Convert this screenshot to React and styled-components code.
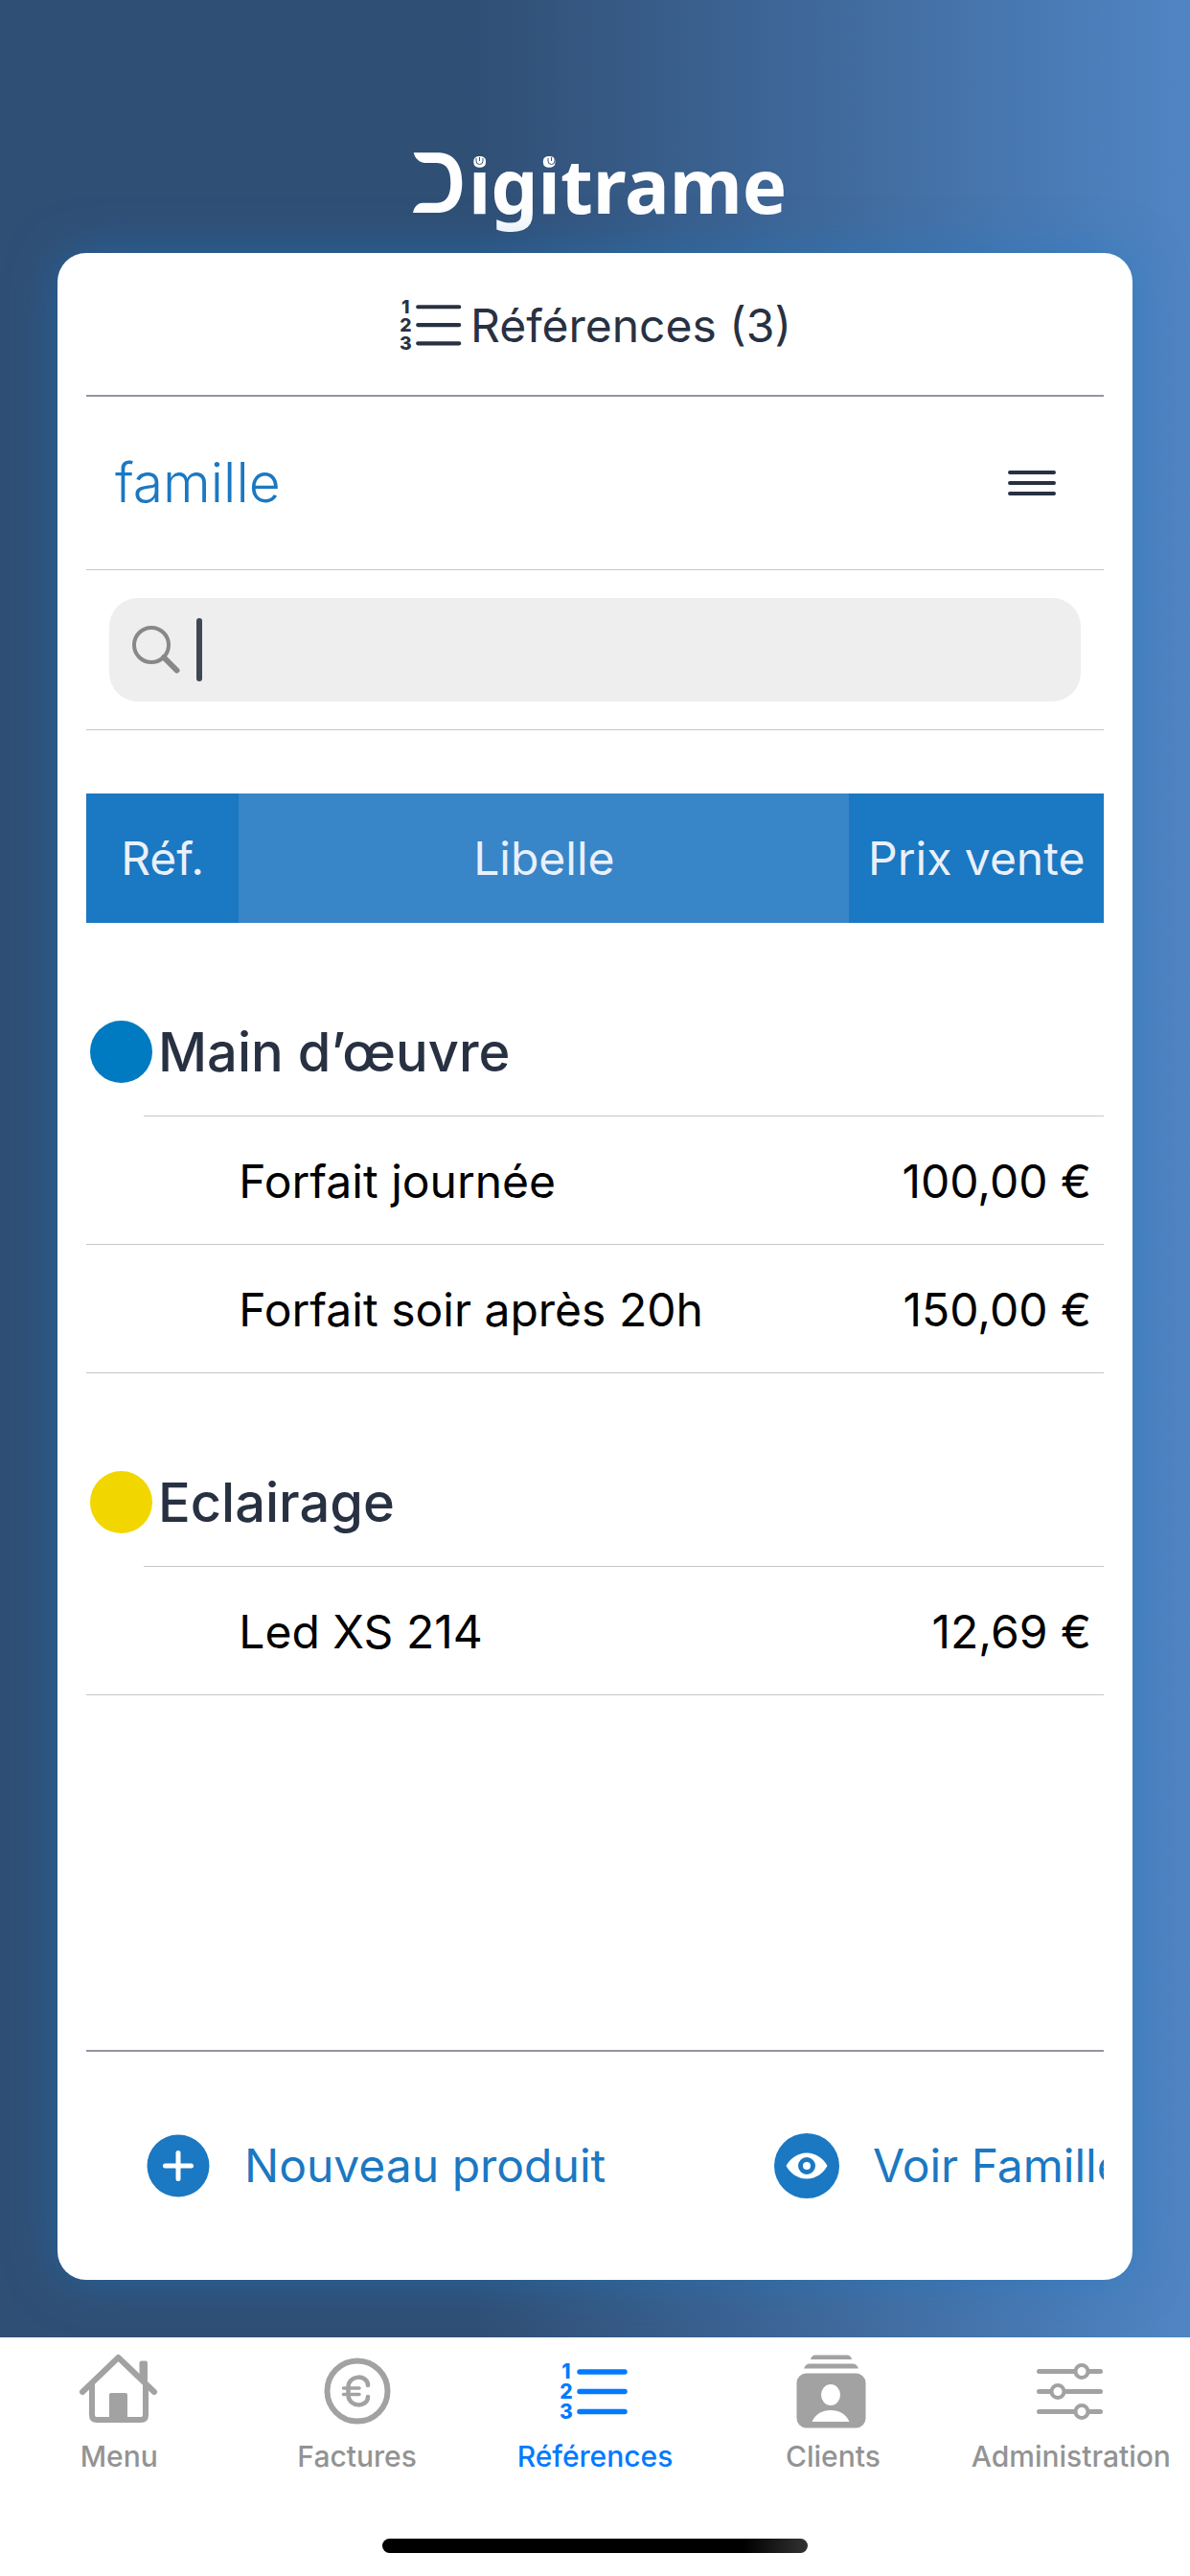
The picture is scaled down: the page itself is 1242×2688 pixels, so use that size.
import React from 'react'
import styled, { createGlobalStyle, css } from 'styled-components'

const colors = {
	navy: '#283142',
	blue: '#1b78c2',
	blueSoft: '#3885c7',
	active: '#007aff',
	grey: '#a2a2a2',
	label: '#939393',
	line: '#c6c6c8',
	lineDark: '#9296a2',
	field: '#eeeeee',
}

const GlobalStyle = createGlobalStyle`
	* {
		box-sizing: border-box;
	}
	body {
		margin: 0;
		font-family: Inter, 'Liberation Sans', sans-serif;
		font-size: 48px;
		line-height: 60px;
		color: ${colors.navy};
	}
	button,
	input {
		font: inherit;
		color: inherit;
		border: 0;
		padding: 0;
		background: none;
		outline: none;
	}
	svg {
		overflow: visible;
	}
`

const Page = styled.div`
	display: flex;
	flex-direction: column;
	min-height: 100vh;
	background: linear-gradient(to right, #304f75 40%, #5085c4 100%);
`
const Brand = styled.header`
	display: flex;
	justify-content: center;
	padding: 156px 0 18px;
`
const Card = styled.main`
	display: flex;
	flex-direction: column;
	flex: 1;
	margin: 0 60px 60px;
	padding: 0 30px;
	border-radius: 30px;
	background: #fff;
	box-shadow: 0 0 50px rgba(27, 121, 197, 0.5);
`
const CardTitle = styled.h1`
	display: flex;
	align-items: center;
	justify-content: center;
	gap: 9px;
	height: 150px;
	margin: 0;
	padding-top: 4px;
	font-size: inherit;
	font-weight: 400;
	border-bottom: 2px solid ${colors.lineDark};
`
const FilterRow = styled.div`
	display: flex;
	align-items: center;
	justify-content: space-between;
	height: 181px;
	padding: 0 49px 0 30px;
	border-bottom: 1px solid ${colors.line};
`
const FilterName = styled.h2`
	margin: 0;
	font-size: 57px;
	font-weight: 300;
	color: ${colors.blue};
`
const IconButton = styled.button`
	display: flex;
`
const SearchRow = styled.form`
	padding: 29px 24px;
	border-bottom: 1px solid ${colors.line};
`
const SearchField = styled.label`
	display: flex;
	align-items: center;
	height: 108px;
	padding: 0 24px;
	border-radius: 30px;
	background: ${colors.field};
`
const Caret = styled.span`
	width: 6px;
	height: 66px;
	margin-left: 17px;
	border-radius: 3px;
	background: #3f4655;
`
const SearchInput = styled.input`
	flex: 1;
	min-width: 0;
	caret-color: transparent;
`
const Table = styled.table`
	width: 100%;
	margin-top: 66px;
	table-layout: fixed;
	border-collapse: separate;
	border-spacing: 0;
`
const HeadCell = styled.th`
	width: ${props => props.$width};
	height: 135px;
	padding: 0;
	font-weight: 400;
	color: #e9f0fb;
	background: ${props => (props.$soft ? colors.blueSoft : colors.blue)};
`
const GroupCell = styled.th`
	padding: 0;
	text-align: left;
	font-size: 56px;
	font-weight: 500;
`
const GroupTitle = styled.div`
	display: flex;
	align-items: center;
	gap: 6px;
	padding: 102px 4px 34px;
`
const Dot = styled.span`
	width: 65px;
	height: 65px;
	border-radius: 50%;
	background: ${props => props.$color};
`
const GroupLine = styled.div`
	height: 1px;
	margin-left: 60px;
	background: ${colors.line};
`
const Cell = styled.td`
	height: 134px;
	padding: 2px 0 0;
	color: #000;
	white-space: nowrap;
	border-bottom: 1px solid ${colors.line};
	${props =>
		props.$price &&
		css`
			padding-right: 13px;
			text-align: right;
		`}
`
const Actions = styled.div`
	display: grid;
	grid-auto-flow: column;
	grid-auto-columns: 656px;
	align-items: center;
	height: 240px;
	margin-top: auto;
	padding-left: 62px;
	overflow: hidden;
	border-top: 2px solid ${colors.lineDark};
`
const Action = styled.button`
	display: flex;
	align-items: center;
	gap: 35px;
	color: ${colors.blue};
	white-space: nowrap;
`
const TabBar = styled.nav`
	display: flex;
	flex-direction: column;
	align-items: center;
	height: 249px;
	background: #fff;
`
const Tabs = styled.div`
	display: grid;
	grid-template-columns: repeat(5, 1fr);
	width: 100%;
	height: 210px;
`
const Tab = styled.a`
	display: flex;
	flex-direction: column;
	align-items: center;
	gap: 10px;
	padding-top: 16px;
	font-size: 30px;
	font-weight: 500;
	line-height: 36px;
	text-decoration: none;
	color: ${props => (props.$active ? colors.active : colors.label)};
	svg {
		color: ${props => (props.$active ? colors.active : colors.grey)};
	}
`
const HomeIndicator = styled.div`
	width: 444px;
	height: 15px;
	border-radius: 8px;
	background: linear-gradient(to right, #000 85%, #333);
`

const Logo = () => (
	<svg width='402' height='90' viewBox='-11 -2 402 90' role='img' aria-label='Digitrame'>
		<path
			fill='#fff'
			d='M.7 1.3H27C43 2 51.3 14 51.3 32.7S43 63.5 27 64H0C1 58 5 53.7 10 53.7H25C36 53 39.3 45 39.3 32.7S36 12.5 25 12H12C6 11 2 7 .7 1.3Z'
		/>
		<text x='58' y='65' fill='#fff' fontFamily='Noto Sans, sans-serif' fontWeight='700' fontSize='78'>
			igitrame
		</text>
		{/* small rings inside the dots of both i */}
		<g fill='none' stroke='#3a5a86' strokeWidth='1'>
			<path d='M66 7V10A3.500 3.500 0 0 0 73 10V7M69.500 6V10' />
			<path d='M141 7V10A3.500 3.500 0 0 0 148 10V7M144.500 6V10' />
		</g>
	</svg>
)

const ListIcon = ({ width, height, stroke }) => (
	<svg width={width} height={height} viewBox={width > 80 ? '0 0 84 80' : '4 11 72 61'} aria-hidden='true'>
		<path d='M26 20H73M26 40.5H73M26 61.5H73' stroke='currentColor' strokeWidth={stroke} strokeLinecap='round' />
		<g fill='currentColor' fontSize='21' fontWeight='800' textAnchor='middle'>
			<text x='12' y='27'>1</text>
			<text x='12' y='48'>2</text>
			<text x='12' y='69'>3</text>
		</g>
	</svg>
)

const MenuIcon = () => (
	<svg width='52' height='28' viewBox='0 0 52 28' aria-hidden='true'>
		<path d='M3 3H49M3 14H49M3 25H49' stroke={colors.navy} strokeWidth='4' strokeLinecap='round' />
	</svg>
)

const SearchIcon = () => (
	<svg width='50' height='50' viewBox='0 0 50 50' fill='none' stroke='#88888b' aria-hidden='true'>
		<circle cx='20' cy='20' r='18' strokeWidth='4' />
		<path d='M33 33L46.5 46.5' strokeWidth='6' strokeLinecap='round' />
	</svg>
)

const PlusIcon = () => (
	<svg width='68' height='68' viewBox='0 0 68 68' aria-hidden='true'>
		<circle cx='34' cy='34' r='32.5' fill={colors.blue} />
		<path d='M34 20.5V47.5M20.5 34H47.5' stroke='#fff' strokeWidth='5' strokeLinecap='round' />
	</svg>
)

const EyeIcon = () => (
	<svg width='68' height='68' viewBox='0 0 68 68' aria-hidden='true'>
		<circle cx='34' cy='34' r='34' fill={colors.blue} />
		<path d='M12.5 34C16 27 24 20.5 34 20.5S52 27 55.5 34C52 41 44 47.5 34 47.5S16 41 12.5 34Z' fill='#fff' />
		<circle cx='34' cy='34' r='6.5' fill='none' stroke={colors.blue} strokeWidth='5' />
	</svg>
)

const HomeIcon = () => (
	<svg width='84' height='80' viewBox='0 0 84 80' fill='none' stroke='currentColor' strokeWidth='6' aria-hidden='true'>
		<path d='M4 41L41.5 5L79 41' strokeLinecap='round' strokeLinejoin='round' />
		<path d='M14 31V65Q14 70 19 70H65Q70 70 70 65V31' />
		<path d='M63.5 25V10.5Q63.5 8.500 65.5 8.5H70Q72 8.5 72 10.5V34Z' fill='currentColor' stroke='none' />
		<path d='M32 71V44Q32 42 34 42H49Q51 42 51 44V71Z' fill='currentColor' stroke='none' />
	</svg>
)

const EuroIcon = () => (
	<svg width='84' height='80' viewBox='0 0 84 80' fill='none' stroke='currentColor' strokeLinecap='round' aria-hidden='true'>
		<circle cx='42' cy='40' r='31.5' strokeWidth='6' />
		<path d='M53 34C53 22.5 32.5 22.5 32.5 36V44C32.5 57.5 53 57.5 53 46' strokeWidth='4.5' />
		<path d='M27.5 37H44M27.5 43.5H44' strokeWidth='3.5' />
	</svg>
)

const ClientsIcon = () => (
	<svg width='84' height='80' viewBox='0 0 84 80' fill='currentColor' aria-hidden='true'>
		<path d='M19 7Q20 2.5 24 2.5H57Q61 2.5 62 7Z' />
		<path d='M12 16.5Q14 11.5 18 11.5H63Q67 11.5 69 16.5Z' />
		<rect x='4.5' y='21.5' width='72' height='57' rx='10' />
		<ellipse cx='40' cy='44' rx='10' ry='11' fill='#fff' />
		<path d='M20.5 72C24 64 31 60 40 60S56 64 59.5 72Z' fill='#fff' />
	</svg>
)

const SlidersIcon = () => (
	<svg width='84' height='80' viewBox='0 0 84 80' stroke='currentColor' strokeLinecap='round' aria-hidden='true'>
		<path d='M8.5 19.5H72.5M8.5 40.5H72.5M8.5 61.5H72.5' strokeWidth='5' />
		<g fill='#fff' strokeWidth='4'>
			<circle cx='53' cy='19.5' r='6.5' />
			<circle cx='28' cy='40.5' r='6.5' />
			<circle cx='53' cy='61.5' r='6.5' />
		</g>
	</svg>
)

const groups = [
	{
		name: 'Main d’œuvre',
		color: '#007ac0',
		items: [
			{ label: 'Forfait journée', price: '100,00 €' },
			{ label: 'Forfait soir après 20h', price: '150,00 €' },
		],
	},
	{
		name: 'Eclairage',
		color: '#f2d600',
		items: [{ label: 'Led XS 214', price: '12,69 €' }],
	},
]

const tabs = [
	{ label: 'Menu', icon: <HomeIcon /> },
	{ label: 'Factures', icon: <EuroIcon /> },
	{ label: 'Références', icon: <ListIcon width={84} height={80} stroke='5.5' />, active: true },
	{ label: 'Clients', icon: <ClientsIcon /> },
	{ label: 'Administration', icon: <SlidersIcon /> },
]

const App = () => {
	return (
		<Page>
			<GlobalStyle />
			<Brand>
				<Logo />
			</Brand>
			<Card>
				<CardTitle>
					<ListIcon width={66} height={56} stroke='4.5' />
					Références (3)
				</CardTitle>
				<FilterRow>
					<FilterName>famille</FilterName>
					<IconButton type='button' aria-label='Trier'>
						<MenuIcon />
					</IconButton>
				</FilterRow>
				<SearchRow role='search'>
					<SearchField>
						<SearchIcon />
						<Caret />
						<SearchInput type='text' aria-label='Rechercher' />
					</SearchField>
				</SearchRow>
				<Table>
					<thead>
						<tr>
							<HeadCell $width='15%'>Réf.</HeadCell>
							<HeadCell $width='60%' $soft>
								Libelle
							</HeadCell>
							<HeadCell $width='25%'>Prix vente</HeadCell>
						</tr>
					</thead>
					{groups.map(group => (
						<tbody key={group.name}>
							<tr>
								<GroupCell colSpan={3} scope='rowgroup'>
									<GroupTitle>
										<Dot $color={group.color} />
										{group.name}
									</GroupTitle>
									<GroupLine />
								</GroupCell>
							</tr>
							{group.items.map(item => (
								<tr key={item.label}>
									<Cell />
									<Cell>{item.label}</Cell>
									<Cell $price>{item.price}</Cell>
								</tr>
							))}
						</tbody>
					))}
				</Table>
				<Actions>
					<Action type='button'>
						<PlusIcon />
						Nouveau produit
					</Action>
					<Action type='button'>
						<EyeIcon />
						Voir Familles
					</Action>
				</Actions>
			</Card>
			<TabBar>
				<Tabs>
					{tabs.map(tab => (
						<Tab key={tab.label} href='#' $active={tab.active}>
							{tab.icon}
							{tab.label}
						</Tab>
					))}
				</Tabs>
				<HomeIndicator />
			</TabBar>
		</Page>
	)
}

export default App
